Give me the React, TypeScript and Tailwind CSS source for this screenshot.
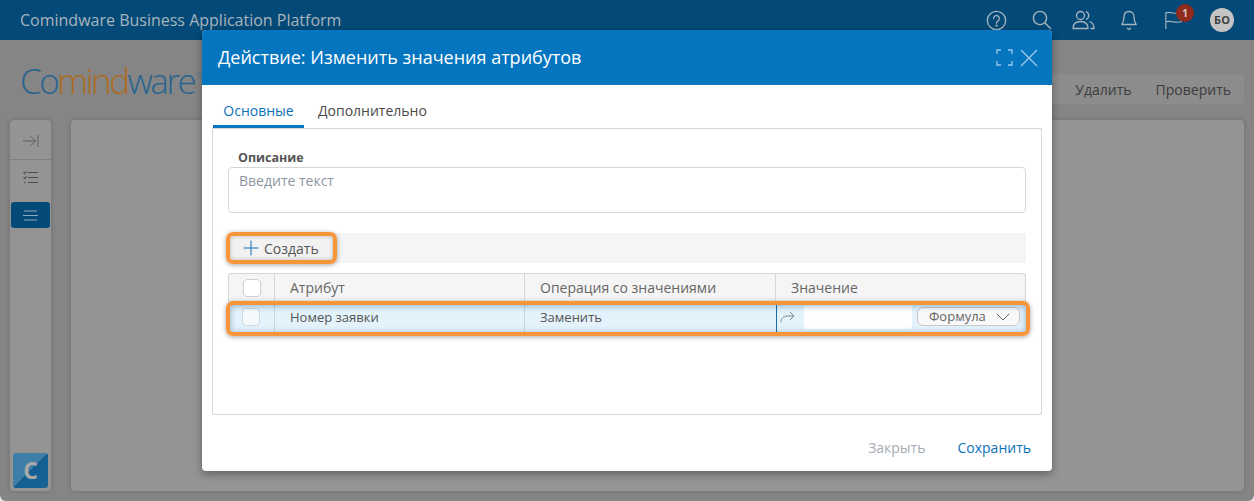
import React from 'react';
import { ChevronDown, Plus, X } from 'lucide-react';

const columns = [
  { title: 'Атрибут', width: 'w-[250px]' },
  { title: 'Операция со значениями', width: 'w-[251px]' },
];

function TopIcons() {
  return (
    <div className="flex items-center text-[#a8b4bc]">
      <svg width="21" height="21" viewBox="0 0 22 22" fill="none" stroke="currentColor" strokeWidth="1.4" className="mr-[25px]">
        <circle cx="11" cy="11" r="9.6" />
        <path d="M8 8.8a3 3 0 1 1 4.8 2.4c-1.2.9-1.8 1.3-1.8 2.6" strokeLinecap="round" />
        <circle cx="11" cy="16.4" r="0.5" />
      </svg>
      <svg width="20" height="20" viewBox="0 0 20 20" fill="none" stroke="currentColor" strokeWidth="1.4" className="mr-[20px]">
        <circle cx="8" cy="8" r="6.6" />
        <path d="M13 13l6 6" />
      </svg>
      <svg width="23" height="20" viewBox="0 0 23 20" fill="none" stroke="currentColor" strokeWidth="1.3" className="mr-[26px]">
        <circle cx="8.5" cy="5.5" r="4" />
        <path d="M1 18.5c0-5 3-7 7.500-7s7.500 2 7.500 7z" strokeLinejoin="round" />
        <path d="M14 1.700a4 4 0 0 1 0 7.600M17.500 11.500c2.500.8 4.500 2.500 4.500 7h-3.500" />
      </svg>
      <svg width="16" height="21" viewBox="0 0 16 21" fill="none" stroke="currentColor" strokeWidth="1.3" className="mr-[27px]">
        <path d="M8 1.500c-3.500 0-5 2.500-5 5.500 0 4-1 5.500-2.200 7.500h14.400C14 12.500 13 11 13 7c0-3-1.500-5.500-5-5.500z" strokeLinejoin="round" />
        <path d="M6 18l2 1.500L10 18" />
      </svg>
      <div className="relative mr-[27px] h-[18px] w-[19px]">
        <svg width="19" height="18" viewBox="0 0 19 20" fill="none" stroke="currentColor" strokeWidth="1.3">
          <path d="M1 20V2c5-2 7 2 17 0v10c-8 2-11-2-17 0" />
        </svg>
        <span className="absolute -right-[11px] -top-[7px] flex h-[18px] w-[18px] items-center justify-center rounded-full bg-[#8f2a1c] text-[10px] font-bold text-[#d9c9c5]">
          1
        </span>
      </div>
      <span className="flex h-[24px] w-[24px] items-center justify-center rounded-full bg-[#c4c4c4] text-[11px] font-bold text-[#3f3f3f]">
        БО
      </span>
    </div>
  );
}

function Sidebar() {
  return (
    <aside className="flex w-[41px] shrink-0 flex-col rounded-[4px] bg-[#949494] shadow-[0_0_5px_rgba(0,0,0,0.18)]">
      <div className="flex h-[40px] items-center justify-center border-b border-[#7f7f7f] pt-[2px]">
        <svg width="16" height="14" viewBox="0 0 16 14" fill="none" stroke="#5e5e5e" strokeWidth="1">
          <path d="M0 7h12M7.500 2l5 5-5 5M15 1v12" />
        </svg>
      </div>
      <div className="flex h-[42px] items-center justify-center pb-[8px]">
        <svg width="15" height="13" viewBox="0 0 15 13" fill="none" stroke="#4e4e4e" strokeWidth="1.1">
          <path d="M5 1.500h10M5 6.500h10M5 11.500h10" />
          <path d="M0.500 1.500l1 1 2-2M0.500 6.500l1 1 2-2" stroke="#44505a" />
          <path d="M1 11.500h2" />
        </svg>
      </div>
      <div className="mx-[1px] flex h-[26px] items-center justify-center rounded-[3px] bg-[#044a78]">
        <svg width="15" height="11" viewBox="0 0 15 11" fill="none" stroke="#8fa7b8" strokeWidth="1.2">
          <path d="M1 1h13M0 5.500h15M1 10h13" />
        </svg>
      </div>
      <div className="mt-auto mb-[3px] ml-[3px] flex h-[35px] w-[35px] items-center justify-center overflow-hidden rounded-[3px] bg-[linear-gradient(135deg,#3f7ea6_0%,#3f7ea6_50%,#135f92_50%,#1a6496_100%)] text-[23px] font-bold leading-none text-[#a9a9a9]">
        C
      </div>
    </aside>
  );
}

function Modal() {
  return (
    <div className="absolute left-[202px] top-[30px] flex h-[441px] w-[850px] flex-col overflow-hidden rounded-[4px] bg-white shadow-[0_3px_8px_rgba(0,0,0,0.35)]">
      <div className="flex h-[55px] shrink-0 items-center justify-between bg-[#0575bf] pl-[16px] pr-[8px]">
        <h2 className="text-[18px] font-normal text-white">Действие: Изменить значения атрибутов</h2>
        <div className="flex items-center gap-[1px] text-[#9cc8e6]">
          <svg width="17" height="17" viewBox="0 0 17 17" fill="none" stroke="currentColor" strokeWidth="1.3">
            <path d="M1 5V1h4M12 1h4v4M16 12v4h-4M5 16H1v-4" />
          </svg>
          <X size={30} strokeWidth={1.1} />
        </div>
      </div>

      <div className="flex h-[43px] shrink-0 items-end pl-[11px] text-[14px]">
        <div className="flex h-[33px] w-[91px] items-start justify-center border-b-[3px] border-[#0575bf] pt-[5px] text-[#0c71b8]">
          Основные
        </div>
        <div className="h-[33px] pl-[14px] pt-[5px] text-[#4a4a4a]">Дополнительно</div>
      </div>

      <div className="mx-[10px] flex h-[287px] shrink-0 flex-col rounded-b-[3px] border border-t-0 border-[#d6d6d6] px-[15px] pt-[21px] shadow-[inset_0_1px_0_#d6d6d6]">
        <label className="pl-[10px] text-[12.500px] font-bold leading-[18px] text-[#555555]">Описание</label>
        <div className="h-[46px] rounded-[4px] border border-[#d6d6d6] px-[10px] pt-[3px] text-[14px] leading-[20px] text-[#8c96a3]">
          Введите текст
        </div>

        <div className="mt-[20px] h-[30px] rounded-[2px] bg-[#f5f5f5]">
          <button className="relative flex h-[30px] w-[107px] items-center rounded-[5px] bg-[#f2f2f2] pl-[11px] text-[14px] text-[#555555]">
            <Plus size={24} strokeWidth={1} className="mr-[1px] text-[#0c71b8]" />
            Создать
            <span className="pointer-events-none absolute -bottom-[1px] -left-[2px] -right-[2px] -top-[1px] rounded-[7px] border-4 border-[#f7953b] shadow-[0_1px_5px_rgba(0,0,0,0.35),inset_0_0_4px_rgba(0,0,0,0.25)]" />
          </button>
        </div>

        <div className="mt-[10px] flex h-[28px] rounded-t-[3px] border border-b-0 border-[#d6d6d6] bg-[#f5f5f5] text-[14px] text-[#666666]">
          <div className="flex w-[46px] items-center justify-center border-r border-[#d6d6d6]">
            <span className="h-[18px] w-[18px] rounded-[4px] border border-[#d0d0d0] bg-white" />
          </div>
          {columns.map(c => (
            <div key={c.title} className={`flex items-center border-r border-[#d6d6d6] pl-[15px] ${c.width}`}>
              {c.title}
            </div>
          ))}
          <div className="flex flex-1 items-center pl-[15px]">Значение</div>
        </div>

        <div className="relative flex h-[32px] bg-[#e3f2fb] text-[13px] text-[#555555]">
          <div className="flex w-[47px] items-center justify-center border-r border-[#c9d6de]">
            <span className="h-[18px] w-[18px] rounded-[4px] border border-[#d0d8dc] bg-[#f4f9fc]" />
          </div>
          <div className="flex w-[250px] items-center border-r border-[#c9d6de] pl-[15px] pt-[1px]">Номер заявки</div>
          <div className="flex w-[251px] items-center pl-[15px] pt-[1px]">Заменить</div>
          <div className="flex flex-1 items-center border-b border-l border-[#1a6ea8]">
            <svg width="15" height="12" viewBox="0 0 15 12" fill="none" stroke="#7d8a94" strokeWidth="1" className="ml-[3px]">
              <path d="M1 11c0-4 3-6 6-6h7M10 1l4 4-4 4" />
            </svg>
            <div className="ml-[9px] h-[24px] w-[108px] rounded-[3px] bg-white" />
            <div className="ml-[5px] flex h-[19px] w-[103px] items-center justify-between rounded-[6px] border border-[#c8c8c8] bg-[#f8f8f8] pl-[11px] pr-[4px] text-[#666666]">
              Формула
              <ChevronDown size={24} strokeWidth={1} className="shrink-0" />
            </div>
          </div>
          <span className="pointer-events-none absolute -bottom-[3px] -left-[2px] -right-[4px] top-0 rounded-[7px] border-4 border-[#f7953b] shadow-[0_1px_5px_rgba(0,0,0,0.35),inset_0_1px_6px_rgba(20,70,110,0.4)]" />
        </div>
      </div>

      <div className="flex flex-1 items-center justify-end gap-[32px] pr-[21px] pt-[8px] text-[14px]">
        <button className="text-[#a6adb5]">Закрыть</button>
        <button className="text-[#0c71b8]">Сохранить</button>
      </div>
    </div>
  );
}

export default function App() {
  return (
    <div className="relative h-[501px] w-[1254px] overflow-hidden bg-[#e8e8e8] font-['Open_Sans',sans-serif]">
      <div className="flex h-full flex-col rounded-b-[6px] bg-[#858585]">
        <header className="flex h-[40px] shrink-0 items-center justify-between bg-[#044a78] pl-[20px] pr-[20px]">
          <span className="text-[16px] text-[#a8b4bc]">Comindware Business Application Platform</span>
          <TopIcons />
        </header>

        <div className="flex h-[80px] shrink-0 items-start justify-between pl-[20px] pr-[10px]">
          <div className="mt-[18px] flex items-start text-[35px] font-[350] leading-[46px] tracking-[-2.500px] text-[#276490]">
            <span>
              Co<span className="text-[#ad6c22]">mind</span>ware
            </span>
            <span className="ml-[2px] mt-[-6px] text-[9px] tracking-normal text-[#4f7d9c]">®</span>
          </div>
          <div className="mt-[34px] flex h-[30px] items-center gap-[24px] rounded-[3px] bg-[#8c8c8c] pl-[120px] pr-[13px] text-[14px] text-[#3d3d3d]">
            <span>Удалить</span>
            <span>Проверить</span>
          </div>
        </div>

        <div className="flex min-h-0 flex-1 gap-[20px] pb-[10px] pl-[10px] pr-[10px]">
          <Sidebar />
          <main className="flex-1 rounded-[4px] bg-[#949494] shadow-[0_0_5px_rgba(0,0,0,0.18)]" />
        </div>
      </div>
      <Modal />
    </div>
  );
}
